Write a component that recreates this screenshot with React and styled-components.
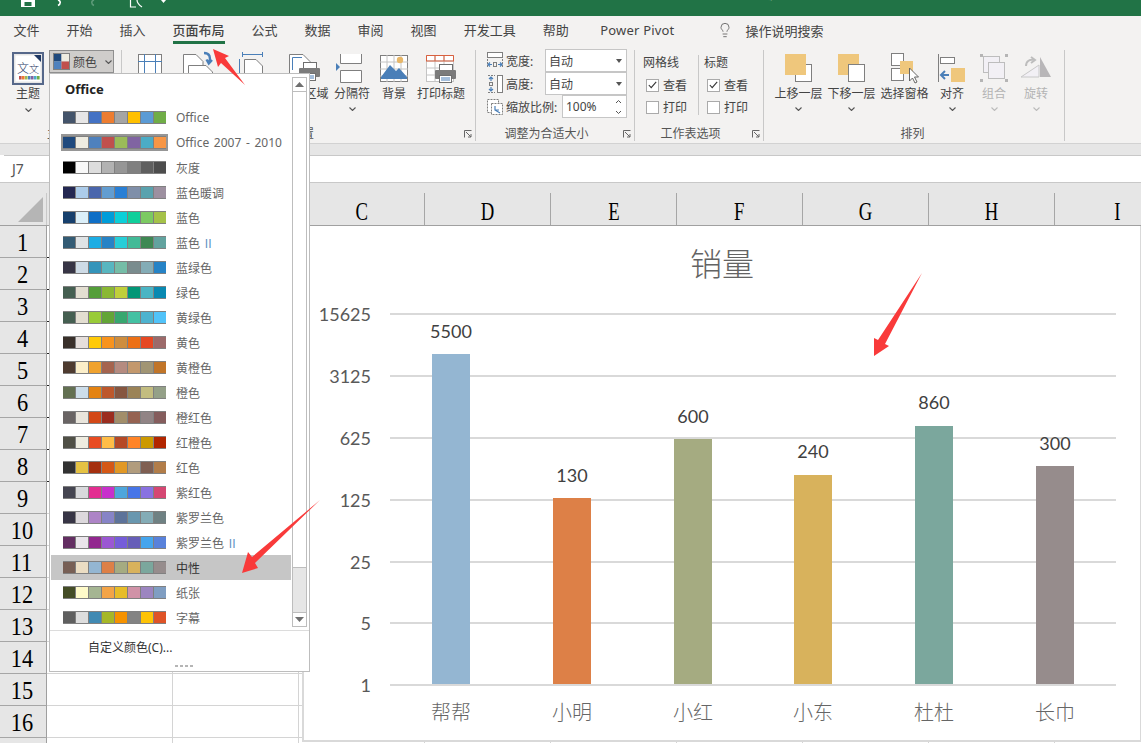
import React from 'react';
import styled, { createGlobalStyle } from 'styled-components';
import { Lightbulb } from 'lucide-react';

const GlobalStyle = createGlobalStyle`
    html, body {
        margin: 0;
        padding: 0;
        background: #fff;
    }
    * {
        box-sizing: border-box;
    }
`

const UI_FONT = `"Noto Sans", "Noto Sans CJK SC", sans-serif`
const BLUE = '#4a7fb8'
const GRAY = '#7f7f7f'
const ORANGE = '#efc77c'

const TABS = ['文件', '开始', '插入', '页面布局', '公式', '数据', '审阅', '视图', '开发工具', '帮助']

const THEMES = [
    ['Office', ['44546a', 'e7e6e6', '4472c4', 'ed7d31', 'a5a5a5', 'ffc000', '5b9bd5', '70ad47']],
    ['Office 2007 - 2010', ['1f497d', 'eeece1', '4f81bd', 'c0504d', '9bbb59', '8064a2', '4bacc6', 'f79646']],
    ['灰度', ['000000', 'f8f8f8', 'dddddd', 'b2b2b2', '969696', '808080', '5f5f5f', '4d4d4d']],
    ['蓝色暖调', ['242852', 'acccea', '4a66ac', '629dd1', '297fd5', '7f8fa9', '5aa2ae', '9d90a0']],
    ['蓝色', ['17406d', 'dbeff9', '0f6fc6', '009dd9', '0bd0d9', '10cf9b', '7cca62', 'a5c249']],
    ['蓝色', ['335b74', 'dfe3e5', '1cade4', '2683c6', '27ced7', '42ba97', '3e8853', '62a39f'], 'II'],
    ['蓝绿色', ['373545', 'cedbe6', '3494ba', '58b6c0', '75bda7', '7a8c8e', '84acb6', '2683c6']],
    ['绿色', ['455f51', 'e3ded1', '549e39', '8ab833', 'c0cf3a', '029676', '4ab5c4', '0989b1']],
    ['黄绿色', ['455f51', 'e3ded1', '99cb38', '63a537', '37a76f', '44c1a3', '4eb3cf', '51c3f9']],
    ['黄色', ['39302a', 'e5dedb', 'ffca08', 'f8931d', 'ce8d3e', 'ec7016', 'e64823', '9c6a6a']],
    ['黄橙色', ['4e3b30', 'fbeec9', 'f0a22e', 'a5644e', 'b58b80', 'c3986d', 'a19574', 'c17529']],
    ['橙色', ['637052', 'ccddea', 'e48312', 'bd582c', '865640', '9b8357', 'c2bc80', '94a088']],
    ['橙红色', ['696464', 'e9e5dc', 'd34817', '9b2d1f', 'a28e6a', '956251', '918485', '855d5d']],
    ['红橙色', ['505046', 'eeece0', 'e84c22', 'ffbd47', 'b64926', 'ff8427', 'cc9900', 'b22600']],
    ['红色', ['323232', 'e5c243', 'a5300f', 'd55816', 'e19825', 'b19c7d', '7f5f52', 'b27d49']],
    ['紫红色', ['454551', 'd8d9dc', 'e32d91', 'c830cc', '4ea6dc', '4775e7', '8971e1', 'd54773']],
    ['紫罗兰色', ['373545', 'dcd8dc', 'ad84c6', '8784c7', '5d739a', '6997af', '84acb6', '6f8183']],
    ['紫罗兰色', ['632e62', 'eae5eb', '92278f', '9b57d3', '755dd9', '665eb8', '45a5ed', '5982db'], 'II'],
    ['中性', ['775f55', 'ebddc3', '94b6d2', 'dd8047', 'a5ab81', 'd8b25c', '7ba79d', '968c8c']],
    ['纸张', ['444d26', 'fefac9', 'a5b592', 'f3a447', 'e7bc29', 'd092a7', '9c85c0', '809ec2']],
    ['字幕', ['5f5f5f', 'dddddd', '418ab3', 'a6b727', 'f69200', '838383', 'fec306', 'df5327']],
]

const COLUMNS = ['A', 'B', 'C', 'D', 'E', 'F', 'G', 'H', 'I']
const ROWS = Array.from({ length: 17 }, (_, i) => i + 1)

const AXIS = [['15625', 314], ['3125', 376], ['625', 438], ['125', 500], ['25', 562], ['5', 623], ['1', 685]]

const BARS = [
    { name: '帮帮', value: 5500, x: 432, top: 354, labelY: 331, color: '#94b6d2' },
    { name: '小明', value: 130, x: 553, top: 498, labelY: 475, color: '#dd8047' },
    { name: '小红', value: 600, x: 674, top: 439, labelY: 416, color: '#a5ab81' },
    { name: '小东', value: 240, x: 794, top: 475, labelY: 451, color: '#d8b25c' },
    { name: '杜杜', value: 860, x: 915, top: 426, labelY: 402, color: '#7ba79d' },
    { name: '长巾', value: 300, x: 1036, top: 466, labelY: 443, color: '#968c8c' },
]

const Chevron = ({ color = '#555' }) => (
    <svg width="7" height="4" viewBox="0 0 7 4">
        <polyline points="0.5,0.5 3.5,3.5 6.5,0.5" fill="none" stroke={color} strokeWidth="1.1" />
    </svg>
)

const Launcher = () => (
    <LauncherBox width="8" height="8" viewBox="0 0 8 8">
        <path d="M0.5 7.5V0.5H7.5M2 2L7 7M7 4V7H4" fill="none" stroke="#666" strokeWidth="1" />
    </LauncherBox>
)

const Printer = ({ x, y }) => (
    <g transform={`translate(${x} ${y})`}>
        <rect x="4.5" y="0.5" width="13" height="7" fill="#fff" stroke="#6f6f6f" />
        <rect x="0" y="6" width="21" height="9" rx="1" fill="#7b7b7b" />
        <rect x="4.5" y="11.5" width="12" height="7" fill="#fff" stroke="#6f6f6f" />
        <path d="M6 14h9M6 16h9" stroke={BLUE} strokeWidth="1" />
    </g>
)

const ThemeIcon = () => (
    <svg width="32" height="33" viewBox="0 0 32 33">
        <rect x="1" y="1" width="30" height="31" fill="#e6e6e6" stroke="#56688a" strokeWidth="2" />
        <path d="M3.5 3.5H22L28.5 10V29.5H3.5Z" fill="#fff" />
        <path d="M22 3H29V10Z" fill="#1f3864" />
        <ThemeGlyph x="5" y="21" fontSize="12">文</ThemeGlyph>
        <ThemeGlyph x="17" y="21" fontSize="10">文</ThemeGlyph>
        {['#c0504d', '#ed7d31', '#9bbb59', '#4f81bd', '#8064a2', '#4bacc6', '#70ad47'].map((c, i) => (
            <rect key={c} x={7 + i * 3} y="24" width="2.6" height="3.5" fill={c} />
        ))}
    </svg>
)

const MarginIcon = () => (
    <svg width="24" height="36" viewBox="0 0 24 36">
        <rect x="0.5" y="4.5" width="23" height="32" fill="#fff" stroke={GRAY} />
        <path d="M0 11.5H24M6.5 4V36M17.5 4V36" stroke={BLUE} strokeWidth="1" />
    </svg>
)

const OrientationIcon = () => (
    <svg width="30" height="36" viewBox="0 0 30 36">
        <path d="M0.5 30V4.5H13L20 11.5V15" fill="#fff" stroke={GRAY} />
        <path d="M5.5 36V15.5H23L29.5 22V36" fill="#fff" stroke={GRAY} />
        <path d="M21 3C27 3 28 8 26 12M23.5 9.5L25.8 13.5L29 10" fill="none" stroke={BLUE} strokeWidth="2.4" />
    </svg>
)

const SizeIcon = () => (
    <svg width="24" height="36" viewBox="0 0 24 36">
        <path d="M3.5 4.5H23.5M3.5 2V7M23.5 2V7" stroke={BLUE} fill="none" />
        <path d="M0.5 9V36" stroke={BLUE} />
        <path d="M5.5 36V9.5H17L23.5 16V36" fill="#fff" stroke={GRAY} />
    </svg>
)

const PrintAreaIcon = () => (
    <svg width="31" height="36" viewBox="0 0 31 36">
        <path d="M0.5 36V4.5H14L21 11.5V15" fill="#fff" stroke={GRAY} />
        <path d="M3.5 20V7.5H13" fill="none" stroke={BLUE} />
        <Printer x={10} y={12} />
    </svg>
)

const BreakIcon = () => (
    <svg width="36" height="36" viewBox="0 0 36 36">
        <path d="M6.5 4V13.5H27.5V4" fill="#fff" stroke={GRAY} />
        <path d="M6.5 32.5V20.5H27.5V32.5Z" fill="#fff" stroke={GRAY} />
        <path d="M2 13L6 17L2 21Z" fill={BLUE} />
    </svg>
)

const BackgroundIcon = () => (
    <svg width="28" height="36" viewBox="0 0 28 36">
        <rect x="0.5" y="5.5" width="27" height="26" fill="#fff" stroke={GRAY} />
        <path d="M0 12H28M0 19H28M0 26H28M7 5V32M14 5V32M21 5V32" stroke="#c4c4c4" />
        <circle cx="20" cy="10" r="3.2" fill="#e8b768" />
        <path d="M1 27L10 15L16 21L19 18L27 27V29H1Z" fill={BLUE} />
    </svg>
)

const PrintTitleIcon = () => (
    <svg width="31" height="36" viewBox="0 0 31 36">
        <rect x="0.5" y="5.5" width="27" height="26" fill="#fff" stroke="#c4c4c4" />
        <path d="M0 11H28M0 18H28M0 25H28M9 5V32M18 5V32" stroke="#c4c4c4" />
        <path d="M0.5 11V5.5H27.5V11M0 11H28M9 5V11M18 5V11" fill="none" stroke="#d9603f" />
        <Printer x={9} y={14} />
    </svg>
)

const BringForwardIcon = () => (
    <svg width="27" height="36" viewBox="0 0 27 36">
        <rect x="10.5" y="14.5" width="16" height="17" fill="#fff" stroke={GRAY} />
        <rect x="0" y="4" width="21" height="21" fill={ORANGE} />
    </svg>
)

const SendBackwardIcon = () => (
    <svg width="27" height="36" viewBox="0 0 27 36">
        <rect x="0" y="4" width="21" height="21" fill={ORANGE} />
        <rect x="10.5" y="14.5" width="16" height="17" fill="#fff" stroke={GRAY} />
    </svg>
)

const SelectionIcon = () => (
    <svg width="28" height="36" viewBox="0 0 28 36">
        <rect x="0.5" y="3.5" width="12" height="12" fill="#fff" stroke={GRAY} />
        <rect x="0.5" y="18.5" width="12" height="12" fill="#fff" stroke={GRAY} />
        <rect x="9" y="11" width="13" height="13" fill={ORANGE} />
        <path d="M18.5 18V31L21.5 28L24 33L26 32L23.5 27H27.5Z" fill="#fff" stroke="#666" />
    </svg>
)

const AlignIcon = () => (
    <svg width="28" height="36" viewBox="0 0 28 36">
        <path d="M0.5 4V32" stroke={GRAY} />
        <rect x="2.5" y="7.5" width="14" height="6" fill="#fff" stroke={GRAY} />
        <rect x="13" y="18" width="14" height="14" fill={ORANGE} />
        <path d="M3 25H11M7 21L3 25L7 29" fill="none" stroke={BLUE} strokeWidth="2" />
    </svg>
)

const GroupIcon = () => (
    <svg width="28" height="36" viewBox="0 0 28 36">
        <rect x="3.5" y="6.5" width="16" height="16" fill="#f2f0f5" stroke="#bdbdbd" />
        <rect x="8.5" y="12.5" width="16" height="16" fill="#f2f0f5" stroke="#bdbdbd" />
        <path d="M0 4H3V7H0ZM25 4H28V7H25ZM0 29H3V32H0ZM25 29H28V32H25Z" fill="#b5b5b5" />
    </svg>
)

const RotateIcon = () => (
    <svg width="32" height="36" viewBox="0 0 32 36">
        <path d="M1 27L19 15V27Z" fill="#f2f0f5" stroke="#c8c8c8" />
        <path d="M20 7L31 27H20Z" fill="#b8b6b8" />
        <path d="M6 16C6 11 10 9 14 10M11 7L15 10L11 13" fill="none" stroke="#bdbdbd" strokeWidth="2" />
    </svg>
)

const WidthIcon = () => (
    <svg width="16" height="18" viewBox="0 0 16 18">
        <rect x="0.5" y="0.5" width="15" height="5" fill="#fff" stroke={GRAY} />
        <path d="M0.5 7V16M15.5 7V16" stroke={GRAY} strokeDasharray="2 1" />
        <rect x="6.5" y="10.5" width="3" height="4" fill="none" stroke={GRAY} />
        <path d="M1 12.5H5M3 10.5L1 12.5L3 14.5M11 12.5H15M13 10.5L15 12.5L13 14.5" fill="none" stroke={BLUE} strokeWidth="1.2" />
    </svg>
)

const HeightIcon = () => (
    <svg width="16" height="18" viewBox="0 0 16 18">
        <rect x="10.5" y="0.5" width="5" height="17" fill="#fff" stroke={GRAY} />
        <path d="M1 0.5H8M1 17.5H8" stroke={GRAY} strokeDasharray="2 1" />
        <rect x="2.5" y="7.5" width="3" height="3" fill="none" stroke={GRAY} />
        <path d="M4 2V6M2 4L4 2L6 4M4 12V16M2 14L4 16L6 14" fill="none" stroke={BLUE} strokeWidth="1.2" />
    </svg>
)

const ScaleIcon = () => (
    <svg width="16" height="16" viewBox="0 0 16 16">
        <rect x="0.5" y="0.5" width="11" height="13" fill="#fff" stroke={GRAY} strokeDasharray="2 1" />
        <rect x="4.5" y="4.5" width="11" height="11" fill="#fff" stroke={GRAY} strokeDasharray="2 1" />
        <path d="M8 7V11H12M8 11L13 14" fill="none" stroke={BLUE} strokeWidth="1.2" />
    </svg>
)

const Check = () => (
    <svg width="9" height="8" viewBox="0 0 9 8">
        <polyline points="0.8,4 3.2,6.6 8.2,0.8" fill="none" stroke="#333" strokeWidth="1.1" />
    </svg>
)

const LargeButton = ({ width, icon, label, chevron, disabled }) => (
    <LargeBtn $width={width}>
        <IconSlot>{icon}</IconSlot>
        <BtnLabel $disabled={disabled}>{label}</BtnLabel>
        {chevron && <ChevronSlot><Chevron color={disabled ? '#bbb' : '#555'} /></ChevronSlot>}
    </LargeBtn>
)

const Group = ({ width, label, launcher, children }) => (
    <GroupBox $width={width}>
        <GroupBody>{children}</GroupBody>
        <GroupFooter $launcher={launcher}>
            <span />
            <GroupLabel>{label}</GroupLabel>
            {launcher ? <Launcher /> : <span />}
        </GroupFooter>
    </GroupBox>
)

const OptionRow = ({ checked, label }) => (
    <OptionLine>
        <CheckBox>{checked && <Check />}</CheckBox>
        {label}
    </OptionLine>
)

const Chart = () => (
    <ChartSvg viewBox="302 225 838 516" width="838" height="516">
        <ChartTitle x="722" y="276" textAnchor="middle">销量</ChartTitle>
        {AXIS.map(([label, y]) => (
            <g key={label}>
                <line x1="390" x2="1116" y1={y} y2={y} stroke="#d9d9d9" strokeWidth="2" />
                <AxisText x="371" y={y + 6.5} textAnchor="end">{label}</AxisText>
            </g>
        ))}
        {BARS.map(bar => (
            <g key={bar.name}>
                <rect x={bar.x} y={bar.top} width="38" height={684 - bar.top} fill={bar.color} />
                <ValueText x={bar.x + 19} y={bar.labelY + 6.5} textAnchor="middle">{bar.value}</ValueText>
                <CategoryText x={bar.x + 19} y="720" textAnchor="middle">{bar.name}</CategoryText>
            </g>
        ))}
    </ChartSvg>
)

const App = () => {
    return (
        <Page>
            <GlobalStyle />
            <TitleBar>
                <svg width="180" height="16" viewBox="0 0 180 16">
                    <path d="M21 0H35V7H21ZM24.5 2V6H31.5V2Z" fill="#fff" fillRule="evenodd" />
                    <path d="M58 0C61 1 61 4 58 5.5" fill="none" stroke="#fff" strokeWidth="1.6" />
                    <path d="M94 0C91 1 91 4 94 5.5" fill="none" stroke="#5c9a78" strokeWidth="1.6" />
                    <path d="M130.5 0V7H136M137 0C137 3 139 5 142 7" fill="none" stroke="#fff" strokeWidth="1.2" />
                    <path d="M161 0H166L163.5 3Z" fill="#fff" />
                </svg>
                <WindowTitle>数据主题色彩的控制板 - Excel</WindowTitle>
            </TitleBar>

            <TabRow>
                {TABS.map(tab => (
                    <Tab key={tab}>
                        <TabLabel $active={tab === '页面布局'}>{tab}</TabLabel>
                    </Tab>
                ))}
                <PivotTab>Power Pivot</PivotTab>
                <SearchHint>
                    <Lightbulb size={16} strokeWidth={1.2} color="#555" />
                    操作说明搜索
                </SearchHint>
            </TabRow>

            <Ribbon>
                <Group width={122} label="主题">
                    <ThemeColumn>
                        <ThemeIcon />
                        <BtnLabel>主题</BtnLabel>
                        <ChevronSlot><Chevron /></ChevronSlot>
                    </ThemeColumn>
                    <ColorButton>
                        <svg width="17" height="17" viewBox="0 0 17 17">
                            <rect x="0.5" y="0.5" width="16" height="16" fill="none" stroke="#808080" />
                            <rect x="1" y="1" width="7.5" height="7.5" fill="#1f497d" />
                            <rect x="8.5" y="1" width="7.5" height="7.5" fill="#eeece1" />
                            <rect x="1" y="8.5" width="7.5" height="7.5" fill="#4f81bd" />
                            <rect x="8.5" y="8.5" width="7.5" height="7.5" fill="#c0504d" />
                        </svg>
                        颜色
                        <Chevron />
                    </ColorButton>
                </Group>

                <Group width={354} label="页面设置" launcher>
                    <PageSetupRow>
                        <LargeButton width={44} icon={<MarginIcon />} label="页边距" chevron />
                        <LargeButton width={52} icon={<OrientationIcon />} label="纸张方向" chevron />
                        <LargeButton width={54} icon={<SizeIcon />} label="纸张大小" chevron />
                        <LargeButton width={53} icon={<PrintAreaIcon />} label="打印区域" chevron />
                        <LargeButton width={42} icon={<BreakIcon />} label="分隔符" chevron />
                        <LargeButton width={42} icon={<BackgroundIcon />} label="背景" />
                        <LargeButton width={52} icon={<PrintTitleIcon />} label="打印标题" />
                    </PageSetupRow>
                </Group>

                <Group width={159} label="调整为合适大小" launcher>
                    <ScaleStack>
                        <ScaleRow>
                            <WidthIcon />
                            <ScaleLabel>宽度:</ScaleLabel>
                            <SelectBox $width={82}>自动<Caret /></SelectBox>
                        </ScaleRow>
                        <ScaleRow>
                            <HeightIcon />
                            <ScaleLabel>高度:</ScaleLabel>
                            <SelectBox $width={82}>自动<Caret /></SelectBox>
                        </ScaleRow>
                        <ScaleRow>
                            <ScaleIcon />
                            <ScaleLabel>缩放比例:</ScaleLabel>
                            <SelectBox $width={65}>
                                100%
                                <SpinArrows>
                                    <svg width="7" height="16" viewBox="0 0 7 16">
                                        <path d="M1 4L3.5 1.5L6 4M1 12L3.5 14.5L6 12" fill="none" stroke="#555" />
                                    </svg>
                                </SpinArrows>
                            </SelectBox>
                        </ScaleRow>
                    </ScaleStack>
                </Group>

                <Group width={129} label="工作表选项" launcher>
                    <OptionColumn $divider $width={56}>
                        <OptionHead>网格线</OptionHead>
                        <OptionRow checked label="查看" />
                        <OptionRow label="打印" />
                    </OptionColumn>
                    <OptionColumn $width={56}>
                        <OptionHead>标题</OptionHead>
                        <OptionRow checked label="查看" />
                        <OptionRow label="打印" />
                    </OptionColumn>
                </Group>

                <Group width={301} label="排列">
                    <ArrangeRow>
                        <LargeButton width={53} icon={<BringForwardIcon />} label="上移一层" chevron />
                        <LargeButton width={53} icon={<SendBackwardIcon />} label="下移一层" chevron />
                        <LargeButton width={53} icon={<SelectionIcon />} label="选择窗格" />
                        <LargeButton width={42} icon={<AlignIcon />} label="对齐" chevron />
                        <LargeButton width={42} icon={<GroupIcon />} label="组合" chevron disabled />
                        <LargeButton width={42} icon={<RotateIcon />} label="旋转" chevron disabled />
                    </ArrangeRow>
                </Group>
            </Ribbon>

            <FormulaBand />
            <FormulaBar>J7</FormulaBar>

            <Sheet>
                <ColumnRow>
                    <Corner />
                    {COLUMNS.map(col => (
                        <ColumnHead key={col}><Narrow $scale={0.72}>{col}</Narrow></ColumnHead>
                    ))}
                </ColumnRow>
                {ROWS.map(row => (
                    <SheetRow key={row}>
                        <RowHead $tick={row < 9}>
                            {row < 17 && <Narrow $scale={0.86}>{row}</Narrow>}
                        </RowHead>
                        {COLUMNS.map(col => <Cell key={col} />)}
                    </SheetRow>
                ))}
            </Sheet>

            <ChartFrame><Chart /></ChartFrame>

            <Menu>
                <MenuBody>
                    <ThemeList>
                        <MenuHead>Office</MenuHead>
                        {THEMES.map(([name, colors, suffix], index) => (
                            <ThemeItem key={name + index} $active={name === '中性'}>
                                <Swatches $selected={index === 1}>
                                    {colors.map((c, i) => <Swatch key={i} $color={c} />)}
                                </Swatches>
                                <ThemeName>
                                    {name}
                                    {suffix && <Suffix> {suffix}</Suffix>}
                                </ThemeName>
                            </ThemeItem>
                        ))}
                    </ThemeList>
                    <ScrollBar>
                        <ScrollButton>
                            <svg width="9" height="5" viewBox="0 0 9 5"><path d="M0 5L4.5 0L9 5Z" fill="#6f6f6f" /></svg>
                        </ScrollButton>
                        <ScrollThumb />
                        <ScrollTrack />
                        <ScrollButton>
                            <svg width="9" height="5" viewBox="0 0 9 5"><path d="M0 0L4.5 5L9 0Z" fill="#6f6f6f" /></svg>
                        </ScrollButton>
                    </ScrollBar>
                </MenuBody>
                <CustomItem>自定义颜色(C)...</CustomItem>
                <Grip>
                    <GripDot /><GripDot /><GripDot /><GripDot />
                </Grip>
            </Menu>

            <Arrows viewBox="0 0 1141 743" width="1141" height="743">
                <polygon points="213,49 229,56 225,58 245,85 221,63 218,67" fill="#f93a3a" />
                <polygon points="922,273 885,344 889,346 874,356 874,338 878,340" fill="#f93a3a" />
                <polygon points="320,500 255,563 258,568 242,573 248,552 252,557" fill="#f93a3a" />
            </Arrows>
        </Page>
    )
};
export default App;

const Page = styled.div`
    position: relative;
    width: 1141px;
    height: 743px;
    overflow: hidden;
    display: flex;
    flex-direction: column;
    background: #fff;
    font-family: ${UI_FONT};
    color: #444;
`

const TitleBar = styled.div`
    height: 16px;
    flex: none;
    display: flex;
    background: #217346;
    overflow: hidden;
`

const WindowTitle = styled.div`
    margin: -14px 0 0 573px;
    font-size: 12px;
    line-height: 18px;
    color: #fff;
    white-space: pre;
    word-spacing: 8px;
`

const TabRow = styled.div`
    height: 31px;
    flex: none;
    display: flex;
    background: #f3f2f1;
    font-size: 13px;
`

const Tab = styled.div`
    padding: 0 13.5px;
`

const TabLabel = styled.span`
    display: block;
    height: 28px;
    line-height: 28px;
    white-space: nowrap;
    font-weight: ${p => (p.$active ? 500 : 400)};
    box-shadow: ${p => (p.$active ? 'inset 0 -3px 0 #217346' : 'none')};
`

const PivotTab = styled.span`
    margin-left: 18px;
    line-height: 28px;
    white-space: nowrap;
    letter-spacing: 0.2px;
`

const SearchHint = styled.div`
    margin-left: 42px;
    height: 28px;
    display: flex;
    align-items: center;
    gap: 13px;
    white-space: nowrap;
`

const Ribbon = styled.div`
    height: 97px;
    flex: none;
    display: flex;
    padding-top: 3px;
    background: #f3f2f1;
    border-bottom: 1px solid #d2d2d2;
`

const GroupBox = styled.div`
    width: ${p => p.$width}px;
    height: 91px;
    flex: none;
    display: flex;
    flex-direction: column;
    border-right: 1px solid #c8c8c8;
`

const GroupBody = styled.div`
    height: 76px;
    display: flex;
    align-items: flex-start;
`

const GroupFooter = styled.div`
    height: 15px;
    display: grid;
    grid-template-columns: 1fr auto 1fr;
    align-items: center;
    padding-right: ${p => (p.$launcher ? 17 : 3)}px;
`

const GroupLabel = styled.span`
    font-size: 12px;
    line-height: 15px;
    color: #555;
    white-space: nowrap;
`

const LauncherBox = styled.svg`
    justify-self: end;
    margin-right: -14px;
`

const LargeBtn = styled.div`
    width: ${p => p.$width}px;
    flex: none;
    display: flex;
    flex-direction: column;
    align-items: center;
`

const IconSlot = styled.div`
    height: 36px;
    overflow: hidden;
    display: flex;
    justify-content: center;
`

const BtnLabel = styled.span`
    height: 15px;
    font-size: 12px;
    line-height: 15px;
    white-space: nowrap;
    color: ${p => (p.$disabled ? '#b4b4b4' : '#444')};
`

const ChevronSlot = styled.div`
    height: 14px;
    display: flex;
    align-items: center;
    justify-content: center;
    margin-top: 1px;
`

const ThemeColumn = styled.div`
    width: 32px;
    margin: 2px 0 0 12px;
    display: flex;
    flex-direction: column;
    align-items: center;
    gap: 1px;
`

const ThemeGlyph = styled.text`
    font-family: "Noto Sans CJK SC", sans-serif;
    font-weight: 300;
    fill: #1f3864;
`

const ColorButton = styled.div`
    width: 65px;
    height: 23px;
    margin-left: 5px;
    padding-left: 3px;
    display: flex;
    align-items: center;
    gap: 3px;
    font-size: 12px;
    background: #cfcdcb;
    border: 1px solid #8f8f8f;

    svg:last-child {
        margin-left: 5px;
    }
`

const PageSetupRow = styled.div`
    display: flex;
    padding-left: 6px;
`

const ArrangeRow = styled.div`
    display: flex;
    padding-left: 8px;
`

const ScaleStack = styled.div`
    width: 100%;
    margin-top: -1px;
    padding: 0 7px 0 11px;
    display: flex;
    flex-direction: column;
`

const ScaleRow = styled.div`
    height: 23px;
    display: flex;
    align-items: center;
    font-size: 12px;
`

const ScaleLabel = styled.span`
    margin-left: 3px;
    white-space: nowrap;
`

const SelectBox = styled.div`
    width: ${p => p.$width}px;
    height: 23px;
    margin-left: auto;
    padding-left: 3px;
    display: flex;
    align-items: center;
    justify-content: space-between;
    background: #fff;
    border: 1px solid #c6c6c6;
`

const Caret = styled.span`
    width: 0;
    height: 0;
    margin-right: 4px;
    border-left: 3px solid transparent;
    border-right: 3px solid transparent;
    border-top: 4px solid #555;
`

const SpinArrows = styled.span`
    display: flex;
    margin-right: 4px;
`

const OptionColumn = styled.div`
    width: ${p => p.$width}px;
    height: 60px;
    margin: 5px 0 0 ${p => (p.$divider ? 8 : 5)}px;
    border-right: ${p => (p.$divider ? '1px solid #c8c8c8' : 'none')};
`

const OptionHead = styled.div`
    height: 19px;
    font-size: 12px;
    line-height: 16px;
`

const OptionLine = styled.div`
    height: 22px;
    padding-left: 3px;
    display: flex;
    align-items: center;
    gap: 4px;
    font-size: 12px;
    white-space: nowrap;
`

const CheckBox = styled.span`
    width: 13px;
    height: 13px;
    display: flex;
    align-items: center;
    justify-content: center;
    background: #fff;
    border: 1px solid #aaa;
`

const FormulaBand = styled.div`
    height: 11px;
    flex: none;
    background: #e6e6e6;
`

const FormulaBar = styled.div`
    height: 28px;
    flex: none;
    padding-left: 8px;
    margin-left: 4px;
    font-size: 14px;
    line-height: 25px;
    color: #555;
    background: #fff;
    border-top: 1px solid #c8c8c8;
    border-bottom: 1px solid #c8c8c8;
`

const Sheet = styled.div`
    flex: 1;
    overflow: hidden;
    margin-top: -1px;
    background: #fff;
`

const ColumnRow = styled.div`
    height: 44px;
    display: flex;
    align-items: flex-end;
    padding-top: 11px;
    background: #e6e6e6;
    border-top: 1px solid #c8c8c8;
    border-bottom: 1px solid #a0a0a0;
`

const Corner = styled.div`
    position: relative;
    width: 47px;
    height: 32px;
    flex: none;
    border-right: 1px solid #c8c8c8;

    &::after {
        content: '';
        position: absolute;
        right: 3px;
        bottom: 3px;
        border-style: solid;
        border-width: 0 0 25px 25px;
        border-color: transparent transparent #b5b5b5 transparent;
    }
`

const ColumnHead = styled.div`
    width: 126px;
    height: 32px;
    flex: none;
    display: flex;
    align-items: center;
    justify-content: center;
    padding-top: 5px;
    border-right: 1px solid #a6a6a6;
    font-family: "Liberation Serif", serif;
    font-size: 26px;
    color: #000;
`

const Narrow = styled.span`
    display: inline-block;
    transform: scaleX(${p => p.$scale});
`

const SheetRow = styled.div`
    display: flex;
    height: 32px;
`

const RowHead = styled.div`
    position: relative;
    width: 47px;
    flex: none;
    display: flex;
    align-items: center;
    justify-content: center;
    padding: 3px 2px 0 0;
    background: #e6e6e6;
    border-right: 1px solid #9f9f9f;
    border-bottom: 1px solid #a6a6a6;
    font-family: "Liberation Serif", serif;
    font-size: 26px;
    color: #000;

    &::after {
        content: '';
        display: ${p => (p.$tick ? 'block' : 'none')};
        position: absolute;
        left: 47px;
        bottom: -1px;
        width: 2px;
        height: 1px;
        background: #222;
    }
`

const Cell = styled.div`
    width: 126px;
    flex: none;
    border-right: 1px solid #d4d4d4;
    border-bottom: 1px solid #d4d4d4;
`

const ChartFrame = styled.div`
    position: absolute;
    left: 302px;
    top: 226px;
    width: 839px;
    height: 516px;
    background: #fff;
    border: 2px solid #d9d9d9;
    border-top: none;
    border-right-width: 1px;
    overflow: hidden;
`

const ChartSvg = styled.svg`
    display: block;
    margin-left: -2px;
    margin-top: -1px;
`

const ChartTitle = styled.text`
    font-family: "Noto Sans CJK SC", sans-serif;
    font-size: 32px;
    font-weight: 300;
    fill: #636363;
`

const AxisText = styled.text`
    font-family: Lato, sans-serif;
    font-size: 18px;
    fill: #595959;
`

const ValueText = styled.text`
    font-family: Lato, sans-serif;
    font-size: 18px;
    fill: #404040;
`

const CategoryText = styled.text`
    font-family: "Noto Sans CJK SC", sans-serif;
    font-size: 20px;
    font-weight: 300;
    fill: #666;
`

const Menu = styled.div`
    position: absolute;
    left: 49px;
    top: 73px;
    width: 261px;
    height: 599px;
    display: flex;
    flex-direction: column;
    background: #fff;
    border: 1px solid #bdbdbd;
`

const MenuBody = styled.div`
    height: 557px;
    flex: none;
    display: flex;
    border-bottom: 1px solid #dcdcdc;
`

const ThemeList = styled.div`
    width: 242px;
    flex: none;
`

const MenuHead = styled.div`
    height: 31px;
    padding-left: 15px;
    font-size: 13px;
    font-weight: 700;
    line-height: 31px;
    color: #222;
`

const ThemeItem = styled.div`
    height: 25px;
    margin-left: 1px;
    width: 240px;
    padding-left: 12px;
    display: flex;
    align-items: center;
    background: ${p => (p.$active ? '#c6c6c6' : 'transparent')};
    color: ${p => (p.$active ? '#333' : '#666')};
`

const Swatches = styled.div`
    display: flex;
    gap: 1px;
    padding: 1px 0;
    background: #808080;
    outline: ${p => (p.$selected ? '2px solid #969696' : 'none')};
`

const Swatch = styled.span`
    width: 12px;
    height: 11px;
    background: #${p => p.$color};
`

const ThemeName = styled.span`
    margin-left: 10px;
    font-size: 12px;
    white-space: pre;
    word-spacing: 1.5px;
`

const Suffix = styled.span`
    font-family: "Liberation Sans", sans-serif;
    color: #5f93c4;
`

const ScrollBar = styled.div`
    width: 15px;
    height: 550px;
    flex: none;
    margin-top: 3px;
    display: flex;
    flex-direction: column;
    background: #e6e6e6;
    border-left: 1px solid #bdbdbd;
    border-right: 1px solid #bdbdbd;
`

const ScrollButton = styled.div`
    height: 15px;
    flex: none;
    display: flex;
    align-items: center;
    justify-content: center;
    background: #fff;
    border-top: 1px solid #bdbdbd;
    border-bottom: 1px solid #bdbdbd;
`

const ScrollThumb = styled.div`
    height: 476px;
    flex: none;
    background: #fff;
    border-bottom: 1px solid #bdbdbd;
`

const ScrollTrack = styled.div`
    flex: 1;
`

const CustomItem = styled.div`
    height: 31px;
    padding-left: 38px;
    font-size: 12px;
    line-height: 33px;
    color: #333;
`

const Grip = styled.div`
    display: flex;
    justify-content: center;
    gap: 2px;
    padding: 3px 0 0 8px;
`

const GripDot = styled.span`
    width: 3px;
    height: 2px;
    background: #b5b5b5;
`

const Arrows = styled.svg`
    position: absolute;
    left: 0;
    top: 0;
    pointer-events: none;
`
